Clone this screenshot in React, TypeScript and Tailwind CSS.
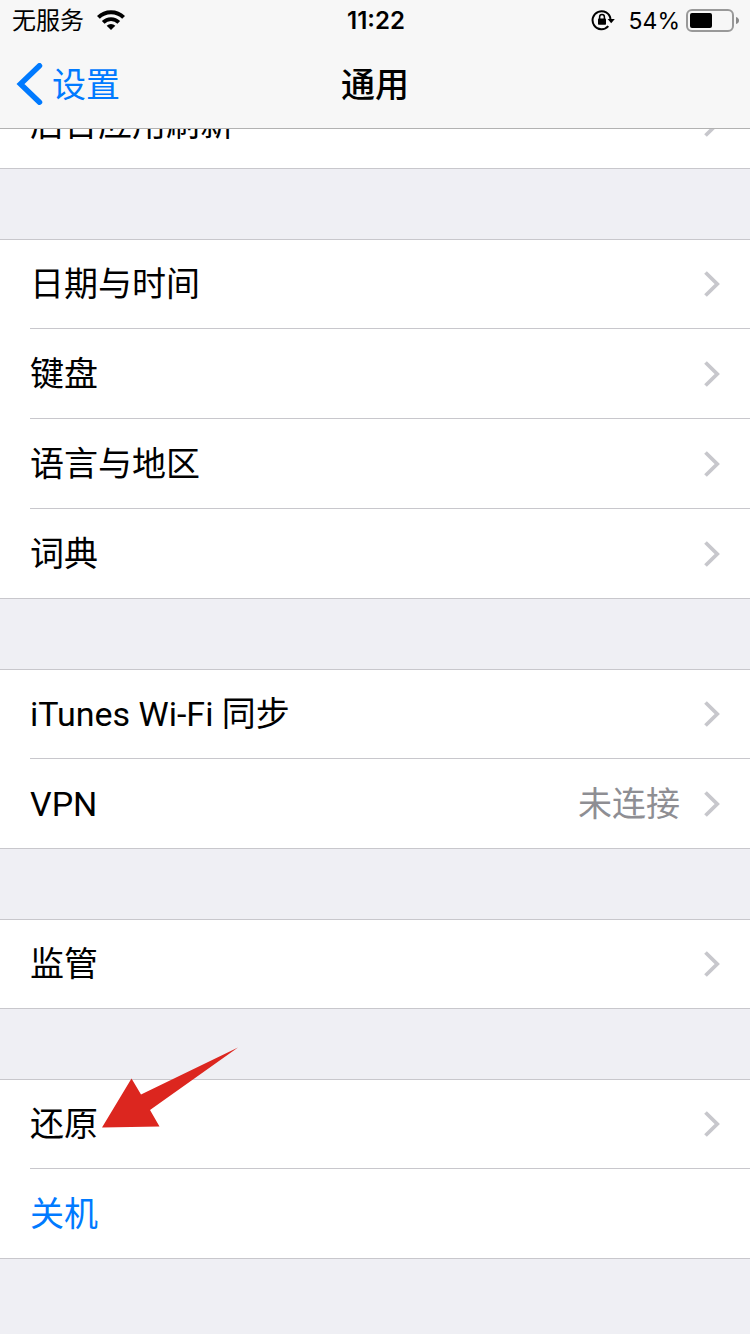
import React from 'react'

type Item = {
    label: string
    value?: string
    action?: boolean
    marked?: boolean
}

const groups: Item[][] = [
    [{ label: '后台应用刷新' }],
    [{ label: '日期与时间' }, { label: '键盘' }, { label: '语言与地区' }, { label: '词典' }],
    [{ label: 'iTunes Wi-Fi 同步' }, { label: 'VPN', value: '未连接' }],
    [{ label: '监管' }],
    [{ label: '还原', marked: true }, { label: '关机', action: true }],
]

function WifiIcon() {
    return (
        <svg width="28" height="22" viewBox="0 0 28 22" fill="none" stroke="#000" aria-hidden="true">
            <path d="M1.4 7.4A17.800 17.800 0 0 1 26.600 7.4" strokeWidth="4" />
            <path d="M6.2 12.400A11 11 0 0 1 21.800 12.400" strokeWidth="3.800" />
            <path d="M14 20L9.700 15.700A6.100 6.100 0 0 1 18.300 15.700Z" fill="#000" stroke="none" />
        </svg>
    )
}

function RotationLockIcon() {
    return (
        <svg width="24" height="22" viewBox="0 0 24 22" fill="none" aria-hidden="true">
            <path d="M17.300 16.200A9 9 0 1 1 19.500 9" stroke="#000" strokeWidth="2" />
            <path d="M16.600 9H23.800L20.200 13.200Z" fill="#000" />
            <rect x="7" y="8.600" width="8" height="6.200" rx="0.800" fill="#000" />
            <path d="M8.600 9V7A2.400 2.400 0 0 1 13.400 7V9" stroke="#000" strokeWidth="1.500" />
        </svg>
    )
}

function BatteryIcon() {
    return (
        <svg width="54" height="24" viewBox="0 0 54 24" fill="none" aria-hidden="true">
            <rect x="1" y="1" width="46" height="21" rx="5" stroke="#999" strokeWidth="2" />
            <rect x="4" y="4" width="22" height="15" rx="2" fill="#000" />
            <path d="M50 8Q53 9 53 11.500Q53 14 50 15Z" fill="#8a8a8a" />
        </svg>
    )
}

function Chevron() {
    return (
        <svg className="shrink-0" width="16" height="26" viewBox="0 0 16 26" fill="none" stroke="#c7c7cc" strokeWidth="3.800" aria-hidden="true">
            <path d="M1.500 1.500L13.200 13L1.500 24.500" />
        </svg>
    )
}

function Arrow() {
    return (
        <svg className="absolute left-[102px] -top-[33px] pointer-events-none" width="136" height="81" viewBox="0 0 136 81" aria-hidden="true">
            <path d="M0 80.500L29.500 31.500L39 47.500L136 0.500L48 63L57.500 79.500Z" fill="#dc261f" />
        </svg>
    )
}

function Row({ item, last }: { item: Item; last: boolean }) {
    return (
        <li className="relative h-[90px] bg-white pl-[30px] border-[#c8c7cc] first:border-t last:border-b">
            <button
                type="button"
                className={`flex h-full w-full items-center gap-6 pr-[30px] text-left border-[#c8c7cc] ${last ? '' : 'border-b'} ${item.action ? 'text-[#007aff]' : 'text-black'}`}
            >
                <span className="flex-1">{item.label}</span>
                {item.value && <span className="text-[#8e8e93]">{item.value}</span>}
                {!item.action && <Chevron />}
            </button>
            {item.marked && <Arrow />}
        </li>
    )
}

export default function App() {
    return (
        <div className="min-h-screen bg-[#efeff4] font-[Inter,'Noto_Sans_CJK_SC',sans-serif] text-[34px] leading-[50px] text-black">
            <header className="sticky top-0 z-10 border-b border-[#b2b2b2] bg-[#f7f7f7]">
                <div className="grid h-[42px] grid-cols-3 items-center pl-3 pr-[10px] text-2xl">
                    <div className="flex items-center gap-[13px]">
                        <span>无服务</span>
                        <WifiIcon />
                    </div>
                    <span className="text-center font-semibold">11:22</span>
                    <div className="flex items-center justify-end gap-[6px]">
                        <RotationLockIcon />
                        <span className="pl-2 text-[23px]">54%</span>
                        <BatteryIcon />
                    </div>
                </div>
                <div className="grid h-[86px] grid-cols-3 items-center px-4">
                    <a href="#settings" className="flex items-center gap-2 text-[#007aff]">
                        <svg width="28" height="44" viewBox="0 0 28 44" fill="none" stroke="currentColor" strokeWidth="5.500" strokeLinecap="round" aria-hidden="true">
                            <path d="M23.500 2.800L4.500 21L23.500 39.200" />
                        </svg>
                        设置
                    </a>
                    <h1 className="text-center font-medium">通用</h1>
                </div>
            </header>
            {/* the list is scrolled partly under the header */}
            <main className="-mt-[50px] flex flex-col gap-[70px] pb-[75px] font-[Roboto,'Noto_Sans_CJK_SC',sans-serif]">
                {groups.map((items) => (
                    <ul key={items[0].label}>
                        {items.map((item, i) => (
                            <Row key={item.label} item={item} last={i === items.length - 1} />
                        ))}
                    </ul>
                ))}
            </main>
        </div>
    )
}
